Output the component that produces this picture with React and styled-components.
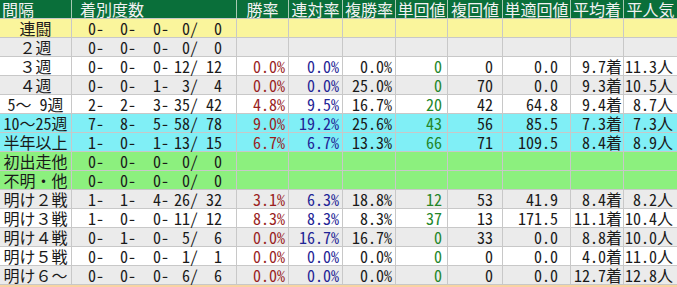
import styled, { createGlobalStyle } from 'styled-components'

const GlobalStyle = createGlobalStyle`
  body {
    margin: 0;
    background: #ffffff;
    font-family: "Noto Sans Mono CJK JP", "Noto Sans CJK JP", sans-serif;
  }
`;

const COLS = '71px 164px 51px 53px 52px 51px 54px 67px 52px 53px';

const Table = styled.div`
  width: 677px;
  display: flex;
  flex-direction: column;
  gap: 1px;
  background: #c8c8c8;
`;

const Row = styled.div`
  display: grid;
  grid-template-columns: ${COLS};
  gap: 1px;
  height: ${p => p.$h || 18}px;
  background: ${p => p.$line || '#c8c8c8'};
  & > * {
    background: ${p => p.$bg};
  }
`;

const Head = styled.div`
  color: #f2f2f2;
  font-size: 16px;
  line-height: 18px;
  white-space: nowrap;
  overflow: hidden;
  text-align: ${p => p.$align || 'center'};
  padding-left: ${p => p.$pl || 0}px;
`;

const Label = styled.div`
  font-size: 16px;
  line-height: 18px;
  color: #1a1a1a;
  text-align: center;
  white-space: pre;
  overflow: hidden;
`;

const Counts = styled.div`
  display: flex;
  justify-content: flex-end;
  padding-right: 14px;
  font-size: 16px;
  line-height: 18px;
  color: #1a1a1a;
`;

const Slot = styled.span`
  width: ${p => p.$w}px;
  text-align: right;
  white-space: pre;
`;

const Num = styled.div`
  font-size: 16px;
  line-height: 18px;
  text-align: right;
  white-space: nowrap;
  overflow: hidden;
  padding-right: ${p => p.$pr}px;
  color: ${p => p.$color || '#1a1a1a'};
`;

const Tail = styled.div`
  height: 20px;
  background: #f8d3a2;
`;

const BG = {
  yellow: '#faf59c',
  gray: '#ebebeb',
  white: '#ffffff',
  cyan: '#80eff6',
  green: '#8cf07e',
};

const numCols = [
  { pr: 3, color: '#9a1f1f' },
  { pr: 3, color: '#1f2596' },
  { pr: 3 },
  { pr: 5, color: '#23862a' },
  { pr: 9 },
  { pr: 12 },
  { pr: 1 },
  { pr: 4 },
];

const rows = [
  ['連闘', 'yellow', [0, 0, 0, 0, 0], null],
  ['２週', 'gray', [0, 0, 0, 0, 0], null],
  ['３週', 'white', [0, 0, 0, 12, 12], ['0.0%', '0.0%', '0.0%', '0', '0', '0.0', '9.7着', '11.3人']],
  ['４週', 'gray', [0, 0, 1, 3, 4], ['0.0%', '0.0%', '25.0%', '0', '70', '0.0', '9.3着', '10.5人']],
  ['5～ 9週', 'white', [2, 2, 3, 35, 42], ['4.8%', '9.5%', '16.7%', '20', '42', '64.8', '9.4着', '8.7人']],
  ['10～25週', 'cyan', [7, 8, 5, 58, 78], ['9.0%', '19.2%', '25.6%', '43', '56', '85.5', '7.3着', '7.3人']],
  ['半年以上', 'cyan', [1, 0, 1, 13, 15], ['6.7%', '6.7%', '13.3%', '66', '71', '109.5', '8.4着', '8.9人']],
  ['初出走他', 'green', [0, 0, 0, 0, 0], null],
  ['不明・他', 'green', [0, 0, 0, 0, 0], null],
  ['明け２戦', 'gray', [1, 1, 4, 26, 32], ['3.1%', '6.3%', '18.8%', '12', '53', '41.9', '8.4着', '8.2人']],
  ['明け３戦', 'white', [1, 0, 0, 11, 12], ['8.3%', '8.3%', '8.3%', '37', '13', '171.5', '11.1着', '10.4人']],
  ['明け４戦', 'gray', [0, 1, 0, 5, 6], ['0.0%', '16.7%', '16.7%', '0', '33', '0.0', '8.8着', '10.0人']],
  ['明け５戦', 'white', [0, 0, 0, 1, 1], ['0.0%', '0.0%', '0.0%', '0', '0', '0.0', '4.0着', '11.0人']],
  ['明け６～', 'gray', [0, 0, 0, 6, 6], ['0.0%', '0.0%', '0.0%', '0', '0', '0.0', '12.7着', '12.8人']],
];

const headers = ['勝率', '連対率', '複勝率', '単回値', '複回値', '単適回値', '平均着', '平人気'];

function CountCell({ c }) {
  return (
    <Counts>
      <Slot $w={32}>{c[0]}-</Slot>
      <Slot $w={32}>{c[1]}-</Slot>
      <Slot $w={33}>{c[2]}-</Slot>
      <Slot $w={29}>{c[3]}/</Slot>
      <Slot $w={24}>{c[4]}</Slot>
    </Counts>
  );
}

export default function App() {
  return (
    <>
      <GlobalStyle />
      <Table>
        <Row $bg="#0a6f3a" $line="#a9c9b2">
          <Head $align="left" $pl={2}>間隔</Head>
          <Head $align="left" $pl={8}>着別度数</Head>
          {headers.map(h => <Head key={h}>{h}</Head>)}
        </Row>
        {rows.map(([label, bg, counts, vals]) => (
          <Row key={label} $bg={BG[bg]}>
            <Label>{label}</Label>
            <CountCell c={counts} />
            {numCols.map((col, i) => (
              <Num key={i} $pr={col.pr} $color={col.color}>
                {vals ? vals[i] : ''}
              </Num>
            ))}
          </Row>
        ))}
        <Tail />
      </Table>
    </>
  );
}
